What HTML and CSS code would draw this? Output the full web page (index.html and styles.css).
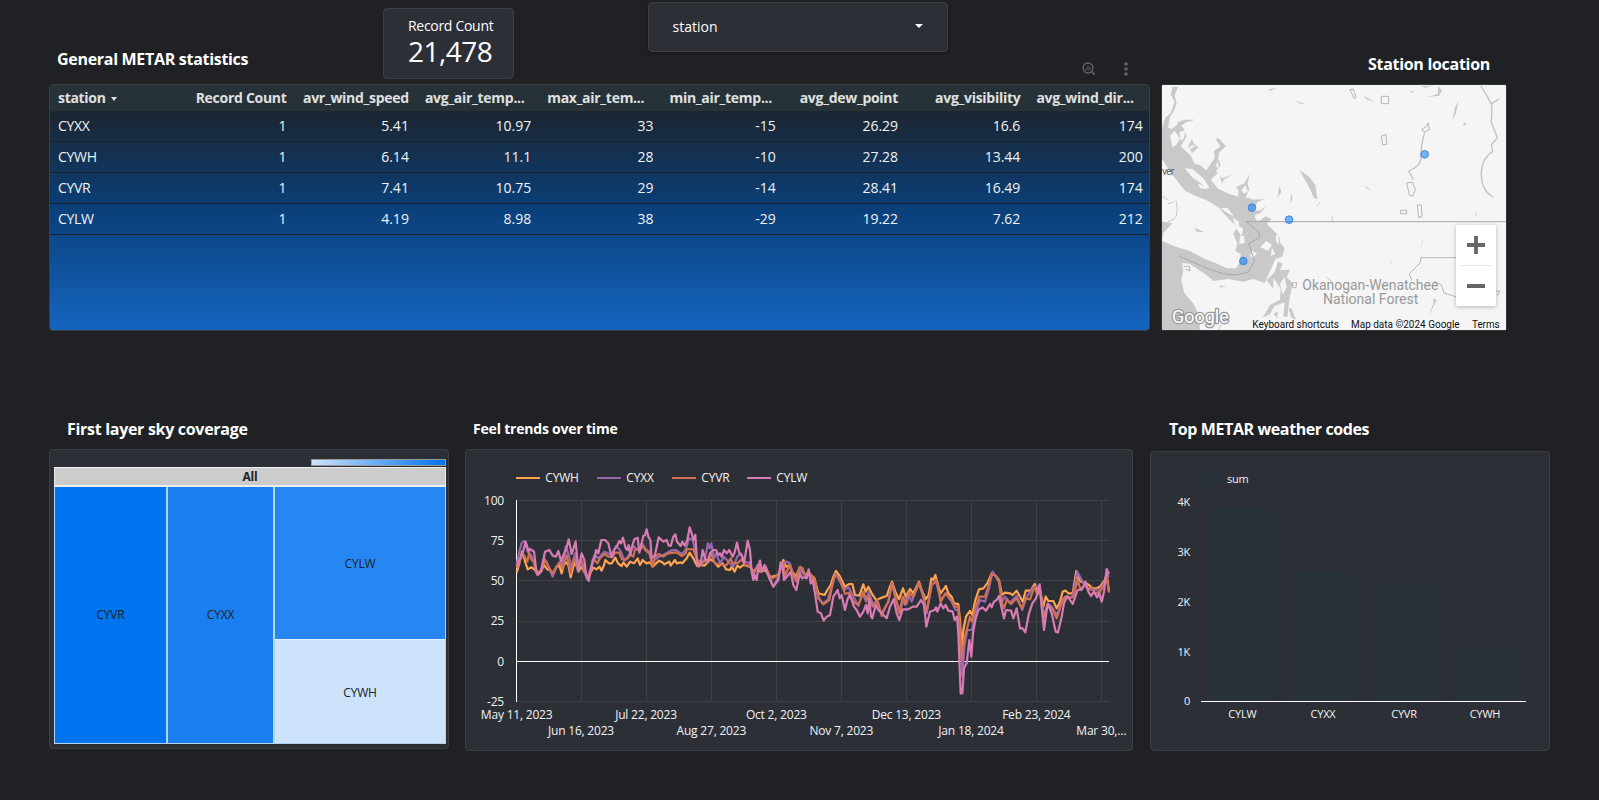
FILE: index.html
```html
<!DOCTYPE html>
<html lang="en">
<head>
<meta charset="utf-8">
<title>METAR dashboard</title>
<link rel="stylesheet" href="styles.css">
</head>
<body>
<main class="dashboard">
  <header class="top">
    <h2 class="title title-stats">General METAR statistics</h2>
    <div class="scorecard"><span class="score-label">Record Count</span><span class="score-value">21,478</span></div>
    <div class="select"><span>station</span><i class="caret"></i></div>
    <div class="tools">
      <svg width="14" height="14" viewBox="0 0 14 14" fill="none" stroke="#626468"><circle cx="6" cy="6" r="5" stroke-width="1.3"/><path d="M9.6 9.6l3 3" stroke-width="1.6"/><path d="M4 6v2.5M6 3.8v4.7M8 5.2v3.3" stroke-width="1"/></svg>
      <svg width="6" height="14" viewBox="0 0 6 14" fill="#626468"><circle cx="3" cy="2" r="1.8"/><circle cx="3" cy="7" r="1.8"/><circle cx="3" cy="12" r="1.8"/></svg>
    </div>
    <h2 class="title title-map">Station location</h2>
  </header>

  <section class="middle">
    <div class="table">
      <div class="row head"><span>station <i class="caret"></i></span><span>Record Count</span><span>avr_wind_speed</span><span class="cut">avg_air_temp...</span><span class="cut">max_air_tem...</span><span class="cut">min_air_temp...</span><span>avg_dew_point</span><span>avg_visibility</span><span class="cut">avg_wind_dir...</span></div>
      <div class="row"><span>CYXX</span><span>1</span><span>5.41</span><span>10.97</span><span>33</span><span>-15</span><span>26.29</span><span>16.6</span><span>174</span></div>
      <div class="row"><span>CYWH</span><span>1</span><span>6.14</span><span>11.1</span><span>28</span><span>-10</span><span>27.28</span><span>13.44</span><span>200</span></div>
      <div class="row"><span>CYVR</span><span>1</span><span>7.41</span><span>10.75</span><span>29</span><span>-14</span><span>28.41</span><span>16.49</span><span>174</span></div>
      <div class="row"><span>CYLW</span><span>1</span><span>4.19</span><span>8.98</span><span>38</span><span>-29</span><span>19.22</span><span>7.62</span><span>212</span></div>
    </div>
    <div class="map">
      <svg width="344" height="245" viewBox="36 134 1032 735">
        <rect x="36" y="134" width="1032" height="736" fill="#f5f5f5"/>
        <!-- water -->
        <g fill="#c9c9c9">
          <path d="M68 139L84 140 74 165 80 190 68 218 60 230 54 262 66 266 84 250 100 262 110 288 92 318 100 326 122 345 134 370 150 374 172 392 190 362 184 385 204 398 182 418 204 445 240 462 262 468 300 474 322 486 310 510 318 538 328 542 346 528 364 536 350 550 370 570 388 588 390 606 404 624 396 650 376 656 362 688 344 728 310 716 280 724 236 716 190 722 170 704 118 670 96 668 100 690 94 720 102 756 130 790 146 820 150 870 36 870 36 602 80 620 120 632 160 654 196 668 232 684 258 684 270 664 272 640 256 632 262 610 250 580 262 560 240 540 222 520 204 500 170 480 136 466 106 452 80 420 60 394 36 356 36 262 46 232 62 218 74 184 62 164z"/>
          <path d="M82 246L104 238 136 238 108 246 86 262zM204 292l24 26-20 18-4 18 8 20-20 26-24-8 16-24 10-14-2-22 20-14-14-20zM300 400l-8 30 6 16-12 28-22-6 2-18-8-10 24-10zM448 388l30 22 18 24 6 42-10-2-12-28zM388 438l6 16-12 20zM424 458l4 16-8 16zM300 478l44-2-22 10zM310 512l22-2 16-14-16 22-22 8zM352 148l28-6-20 10zM430 180l36 10-14 0zM640 166l36 20-28-10zM780 156l14-8-8 10zM812 138l32-2-18 6zM864 138l12 12-8 16-34 4 30-10zM926 180l-8 38-10 20 6-34zM944 246l6 8-12 2zM640 432l22 18-10-4zM36 544l32 4-28 30-4 24zM132 562l34 14-26-2zM208 736l22 0-18 6zM850 774l10 4-24 50 14-40zM210 408l8 6 30-12-28 18-4 10zM112 326l14-30 6 16 14 8-20 18-6-12 16-8-10-4zM976 512l8 20-8-10zM820 596l-10 38 6-30zM720 656l10 24-8-14z"/>
          <path d="M350 720L374 696 384 664 398 670 390 690 420 688 410 710 430 730 420 764 412 830 400 828 404 786 372 798 360 822 338 832 360 794 390 778 392 746 370 712 370 746z"/>
          <path d="M416 806l8-4 14 36-14-6zM370 820l14-6-2 20z"/>
        </g>
        <!-- islands -->
        <g fill="#f5f5f5">
          <path d="M104 384l24 2 34 30 18 30-26-16-26-18zM144 430l24 8 6 8-24-2zM60 286l14-14 16 22-10 18-12 10zM88 276l18-6-4 24-10 8zM210 504l22-2 20 26-14-6zM248 530l18 14 2 14 12 8-6 22-16-24zM330 620l20-18 16 12-12 18zM270 588l12-2 2 22-16 4zM306 630l14 10-12 14-8-8zM366 622l10 18-14 8zM378 584l8 0 0 30-8-10zM390 730l14-20 6 30-12 24zM196 378l8-16 2 22zM274 450l12-16 8 20-12 6z"/>
        </g>
        <g fill="none" stroke="#a6a6a6" stroke-width="3">
          <path d="M88 648L180 688 220 700 256 704 294 696 314 662 296 610 328 592 328 576 288 544H1068"/>
          <path d="M918 652H812V666L778 700 786 720M852 722l22 12 8 24 26 8 10 4M1038 752h12l-8 14M600 148l10-2 8 26-6 2zM694 168h22v22h-22zM694 288l14-6 2 30-12 2zM816 266l14-8 4-10 4 20-16 8zM770 428l18-2 8 22-8 20-10-4zM802 494l12 0 2 34-10 4zM752 510h18v10h-18zM440 726l-14 2 4 14h8zM102 678l16 0 2 14-14-6" opacity=".8"/>
          <path d="M824 276q-12 40-12 84-6 20-36 32l14 26M992 136l20 32 14 28-2 50 18 46-18 22 4 20q-30 16-34 60-2 56 36 76M1024 190l24-14" stroke="#c2c2c2" stroke-width="4"/>
          <path d="M38 468l16 12M54 490l16-4M78 480q14 60-24 64M546 528l2 14M500 498l10-12M530 710l18 16M206 868l8-16" stroke="#c9c9c9"/>
        </g>
        <g class="map-labels">
          <text x="661" y="750" font-size="42" text-anchor="middle" fill="#999" textLength="408" lengthAdjust="spacingAndGlyphs">Okanogan-Wenatchee</text>
          <text x="662" y="792" font-size="42" text-anchor="middle" fill="#999" textLength="286" lengthAdjust="spacingAndGlyphs">National Forest</text>
          <text x="36" y="404" font-size="32" fill="#666" textLength="37">ver</text>
          <text class="google" x="66" y="847" font-size="57" textLength="170" lengthAdjust="spacingAndGlyphs">Google</text>
          <text x="307" y="863" font-size="31" fill="#111" textLength="260" lengthAdjust="spacingAndGlyphs">Keyboard shortcuts</text>
          <text x="603" y="863" font-size="31" fill="#111" textLength="326" lengthAdjust="spacingAndGlyphs">Map data ©2024 Google</text>
          <text x="966" y="863" font-size="31" fill="#111" textLength="83" lengthAdjust="spacingAndGlyphs">Terms</text>
        </g>
        <g fill="#1a80ee" fill-opacity=".58" stroke="#2582ea" stroke-width="2.5">
          <circle cx="824" cy="342" r="11.5"/><circle cx="306" cy="502" r="11.5"/><circle cx="417" cy="538" r="11.5"/><circle cx="280" cy="662" r="11.5"/>
        </g>
      </svg>
      <div class="zoom">
        <svg width="40" height="81" viewBox="0 0 120 243"><path d="M33 60h54M60 33v54M33 183h54" stroke="#666" stroke-width="11.5"/><path d="M15 121.500h90" stroke="#e6e6e6" stroke-width="3"/></svg>
      </div>
    </div>
  </section>

  <section class="charts">
    <article class="col-tree">
      <h2 class="title">First layer sky coverage</h2>
      <div class="panel tree">
        <div class="legend-bar"></div>
        <div class="tree-head">All</div>
        <div class="tree-body">
          <div class="cell cyvr">CYVR</div><div class="cell cyxx">CYXX</div>
          <div class="cell cylw">CYLW</div><div class="cell cywh">CYWH</div>
        </div>
      </div>
    </article>

    <article class="col-trend">
      <h2 class="title small">Feel trends over time</h2>
      <div class="panel trend">
        <svg width="666" height="300" viewBox="18 150 1998 900">
          <g fill="none" stroke="#3e4145" stroke-width="3">
            <path d="M170 301.500H1947M170 421.500H1947M170 541.500H1947M170 664.500H1947M170 904.500H1947"/>
            <path d="M364.500 301V904M559.500 301V904M754.500 301V904M949.500 301V904M1144.500 301V904M1339.500 301V904M1534.500 301V904M1729.500 301V904M1924.500 301V904"/>
          </g>
          <path d="M169.500 300V906M168 784.500H1947" stroke="#fff" stroke-width="3"/>
          <g fill="none" stroke-width="6.6" stroke-linejoin="round">
            <g stroke="#ffa550">
              <path d="M168 234H240" stroke-width="6"/>
              <polyline points="170,518 178,490 186,455 190,465 197,490 203,508 215,502 225,510 233,525 243,515 252,495 262,508 270,510 278,520 290,500 298,497 305,520 311,495 318,487 325,495 332,532 340,500 347,487 355,515 365,500 375,520 383,530 393,515 400,503 410,508 418,500 425,512 432,495 436,480 447,490 455,490 466,473 474,490 485,498 490,487 500,500 510,485 522,490 533,475 540,495 548,480 558,490 570,487 578,500 597,482 607,487 613,493 628,485 632,497 645,480 650,490 662,487 667,490 680,475 689,458 700,475 711,497 722,495 733,497 743,487 752,478 762,485 775,500 788,490 798,508 810,510 815,500 824,515 832,497 840,503 850,495 870,500 880,515 892,500 900,515 915,510 930,530 938,530 955,525 962,505 970,480 978,500 990,495"/>
              <polyline transform="translate(990)" points="0,495 7,515 18,530 28,505 45,525 58,520 73,535 85,580 104,585 112,570 122,555 130,530 138,513 150,530 165,560 178,552 187,552 195,585 208,587 220,553 227,575 235,560 245,580 258,600 275,593 290,588 300,560 306,545 316,575 327,598 339,565 347,590 360,567 370,580 387,545 397,575 407,598 416,585 424,535 430,540 436,525 447,565 452,580 468,558 475,580 485,590 492,610 505,612 510,660 515,750 520,690 528,650 540,633 547,645 556,600 567,568 580,565 592,550 605,520 615,525 627,540 636,585 645,578 660,580 668,585 680,572 690,590 698,605 707,572 722,572 734,552 742,570 750,570 760,620 767,590 775,603 790,603 800,625 810,605 818,575 827,572 835,580 848,580 859,513 865,535 872,545 885,548 897,555 907,565 920,565 932,558 945,540 950,520 957,575"/>
            </g>
            <g stroke="#9866af">
              <path d="M411 234H483" stroke-width="6"/>
              <polyline points="170,495 178,455 185,428 194,423 203,455 213,465 222,490 232,525 245,505 252,475 262,490 278,530 290,500 300,485 307,495 317,440 325,460 335,505 345,460 353,512 363,480 373,515 381,537 393,510 403,465 415,475 433,455 447,462 458,460 468,438 480,450 494,482 510,460 520,438 535,450 546,430 557,447 568,455 577,485 597,470 610,465 632,452 647,450 665,462 677,450 687,415 698,420 712,480 722,485 733,485 744,430 749,445 754,430 762,475 768,460 780,490 792,470 805,485 820,500 832,470 843,460 855,487 868,487 880,525 893,495 905,510 917,500 928,530 940,560 955,530 965,490 980,485 990,490"/>
              <polyline transform="translate(990)" points="0,490 8,525 20,545 32,500 45,530 58,520 75,550 85,590 97,610 113,600 125,560 137,522 150,545 162,570 176,562 188,585 205,618 218,580 228,605 236,575 248,610 262,610 275,640 295,605 306,550 318,600 330,635 343,590 350,612 357,585 365,605 387,550 400,590 410,640 425,555 438,545 452,600 467,580 485,605 497,630 505,630 512,740 517,830 523,740 532,690 546,690 556,640 570,600 585,605 597,565 608,515 627,545 636,605 645,590 660,608 680,587 697,630 710,590 733,560 749,560 762,650 773,610 785,620 800,645 820,595 848,590 862,515 872,535 887,560 905,570 930,568 945,545 957,525"/>
            </g>
            <g stroke="#cf7152">
              <path d="M636 234H708" stroke-width="6"/>
              <polyline points="170,505 180,480 190,462 202,485 207,460 215,480 222,485 230,520 245,510 255,480 263,495 278,522 290,500 300,487 307,505 320,465 332,520 342,475 352,500 363,478 373,510 384,535 393,500 402,478 412,490 420,475 433,462 445,470 458,470 465,458 477,458 486,478 500,478 512,465 520,470 525,448 540,450 549,438 557,452 568,460 578,500 585,470 597,462 610,470 625,460 650,457 665,468 678,460 680,447 700,448 712,480 722,497 735,478 742,490 752,460 765,490 785,495 800,495 812,475 818,490 832,490 845,478 855,495 870,497 880,520 893,500 905,515 917,500 930,530 938,535 955,525 970,490 975,530 988,495 998,520"/>
              <polyline transform="translate(990)" points="8,520 18,542 28,502 38,505 45,525 56,515 75,545 85,595 100,613 118,600 126,560 135,525 145,530 155,550 165,582 178,578 190,605 205,615 220,575 230,600 236,588 248,620 262,598 275,648 285,625 295,605 306,550 318,600 328,640 338,590 345,615 357,578 370,590 387,548 400,590 410,635 425,555 440,540 452,605 467,580 485,600 495,620 505,620 510,690 516,780 522,720 530,690 540,650 546,665 557,620 568,590 585,590 595,560 604,525 615,525 627,545 636,610 642,625 650,600 663,612 680,595 695,625 708,595 720,598 733,560 742,585 749,565 757,630 763,650 772,615 785,625 800,655 815,610 825,590 838,595 850,590 863,540 872,570 887,550 895,570 905,560 915,580 930,575 945,550 950,530 957,578"/>
            </g>
            <g stroke="#d97cb3">
              <path d="M861 234H933" stroke-width="6"/>
              <polyline points="170,500 178,480 188,460 197,425 206,455 210,447 222,455 228,505 233,523 243,515 248,490 255,455 268,450 278,467 288,470 295,453 303,483 308,470 318,450 326,418 335,462 347,425 355,510 365,460 373,480 378,520 386,543 393,510 398,480 404,475 408,450 415,460 424,420 435,420 445,430 455,472 462,450 470,440 478,423 483,430 489,413 497,445 502,450 506,435 511,465 516,440 523,418 533,413 538,458 545,430 550,408 555,405 560,388 565,410 571,420 575,475 585,465 596,412 610,425 620,420 626,437 632,438 640,410 646,403 651,425 662,438 667,425 674,437 682,420 689,382 695,400 700,420 706,405 711,485 716,500 722,490 728,450 735,475 743,485 750,460 760,450 768,450 775,465 780,460 785,470 792,450 800,460 808,450 818,470 823,460 831,428 838,460 845,465 852,490 863,422 870,450 875,515 880,540 884,525 890,540 895,500 900,482 906,515 914,495 922,520 928,535 940,560 955,540 962,487 968,500 972,540 985,525 992,515 1000,555 1009,570 1015,540 1020,520 1026,535 1032,532"/>
              <polyline transform="translate(990)" points="42,532 50,535 56,508 62,550 68,540 75,580 83,635 93,640 101,662 110,650 120,645 130,590 143,570 149,595 155,585 165,630 172,600 178,585 185,600 192,620 200,630 210,650 220,635 228,615 233,640 238,597 243,650 247,655 257,615 265,630 275,640 290,655 300,620 311,597 320,640 328,660 338,628 355,628 368,620 380,620 393,600 402,615 409,680 420,635 434,630 438,622 442,635 452,610 460,625 467,615 475,632 488,635 494,660 501,650 505,700 512,880 517,880 522,805 530,790 538,720 544,770 549,700 556,660 565,630 577,622 588,632 600,612 605,622 612,605 620,600 627,588 634,620 642,655 648,630 663,632 670,655 680,625 690,685 698,685 706,697 717,640 727,610 738,595 749,553 755,620 762,690 770,630 774,612 785,640 797,695 804,697 815,650 822,610 832,588 840,600 848,612 856,590 863,570 876,568 887,545 895,575 903,588 912,575 921,592 928,580 935,605 942,575 950,507 957,522"/>
            </g>
          </g>
          <g class="labels" font-size="36">
            <text x="256" y="246">CYWH</text><text x="499" y="246">CYXX</text><text x="724" y="246">CYVR</text><text x="949" y="246">CYLW</text>
            <g text-anchor="end"><text x="132" y="315">100</text><text x="132" y="435">75</text><text x="132" y="555">50</text><text x="132" y="675">25</text><text x="132" y="798">0</text><text x="132" y="918">-25</text></g>
            <g text-anchor="middle"><text x="170" y="957">May 11, 2023</text><text x="558" y="957">Jul 22, 2023</text><text x="949" y="957">Oct 2, 2023</text><text x="1339" y="957">Dec 13, 2023</text><text x="1729" y="957">Feb 23, 2024</text><text x="363" y="1005">Jun 16, 2023</text><text x="754" y="1005">Aug 27, 2023</text><text x="1144" y="1005">Nov 7, 2023</text><text x="1533" y="1005">Jan 18, 2024</text><text x="1924" y="1005">Mar 30,…</text></g>
          </g>
        </svg>
      </div>
    </article>

    <article class="col-codes">
      <h2 class="title">Top METAR weather codes</h2>
      <div class="panel codes">
        <svg width="398" height="298" viewBox="33 156 1194 894">
          <g fill="#283238"><rect x="183" y="222" width="64" height="33"/><rect x="210" y="324" width="195" height="579"/><rect x="453" y="516" width="195" height="387"/><rect x="696" y="558" width="195" height="345"/><rect x="939" y="738" width="195" height="165"/></g>
          <path d="M183 904.500H1158" stroke="#fff" stroke-width="3"/>
          <g class="labels" font-size="33">
            <text x="261" y="249">sum</text>
            <g text-anchor="end"><text x="150" y="318">4K</text><text x="150" y="468">3K</text><text x="150" y="618">2K</text><text x="150" y="768">1K</text><text x="150" y="915">0</text></g>
            <g text-anchor="middle"><text x="307" y="954">CYLW</text><text x="549" y="954">CYXX</text><text x="792" y="954">CYVR</text><text x="1035" y="954">CYWH</text></g>
          </g>
        </svg>
      </div>
    </article>
  </section>
</main>
</body>
</html>
```
FILE: styles.css
```css
* { box-sizing: border-box; }
body { margin: 0; background: #202124; color: #fff; font-family: "Open Sans", "Noto Sans", sans-serif; }
.dashboard { width: 1599px; height: 800px; padding-left: 49px; overflow: hidden; }
.title { margin: 0; font-size: 16px; line-height: 22px; font-weight: 700; letter-spacing: -.3px; white-space: nowrap; }
.title.small { font-size: 14px; letter-spacing: -.2px; }

.top { display: flex; height: 84px; align-items: flex-start; }
.title-stats { width: 326px; padding-left: 8px; margin-top: 48px; }
.scorecard { width: 131px; height: 71px; margin: 8px 0 0 8px; padding: 7px 0 0 24px; display: flex; flex-direction: column; background: #2d2f37; border: 1px solid #3c4043; border-radius: 4px; }
.score-label { font-size: 14px; line-height: 19px; letter-spacing: -.3px; white-space: nowrap; }
.score-value { font-size: 28px; line-height: 33px; letter-spacing: -.5px; }
.select { width: 300px; height: 50px; margin: 2px 0 0 134px; padding: 0 24px 2px 23.5px; display: flex; align-items: center; justify-content: space-between; background: #2d2f37; border: 1px solid #3c4043; border-radius: 4px; font-size: 14px; box-shadow: 0 1px 3px #0005; }
.caret { display: inline-block; border: 4px solid transparent; border-top-color: currentColor; border-bottom: 0; }
.tools { display: flex; gap: 27px; margin: 62px 0 0 134px; width: 48px; }
.title-map { margin: 53px 0 0 238px; }

.middle { display: flex; gap: 11px; height: 247px; }
.table { width: 1101px; height: 247px; border: 1px solid #3c4043; border-radius: 4px; overflow: hidden; background: linear-gradient(#1c2530 26px, #0a3f78 122px, #1565c0 245px); }
.row { display: grid; grid-template-columns: repeat(9, 122.300px); width: 1101px; height: 31px; border-bottom: 1px solid #202124; font-size: 14px; line-height: 29px; color: #f1f3f4; }
.row span { padding: 0 8px; text-align: right; white-space: nowrap; }
.row span:first-child { text-align: left; letter-spacing: -.3px; }
.head { height: 26px; line-height: 26px; font-weight: 700; color: #e0e0e0; background: #263238; border: 0; letter-spacing: -.28px; }
.head .cut { text-align: left; }
.head .caret { border-width: 3.500px; border-top-width: 4px; border-bottom: 0; margin-left: 2px; vertical-align: 2px; }
.map { position: relative; width: 346px; height: 247px; border: 1px solid #30383a; border-radius: 2px; overflow: hidden; }
.map > svg, .zoom svg { display: block; }
.zoom { position: absolute; right: 10px; top: 140px; width: 40px; height: 81px; background: #fff; border-radius: 2px; box-shadow: 0 1px 4px #0004; }
.map-labels { font-family: Roboto, sans-serif; }
.google { font-weight: 400; fill: #fff; stroke: #999; stroke-width: 8px; paint-order: stroke; stroke-linejoin: round; }

.charts { display: flex; padding-top: 87px; align-items: flex-start; }
.charts .title { height: 31px; }
.col-tree .title { padding-left: 18px; }
.col-trend { margin-left: 16px; }
.col-trend .title { padding-left: 8px; }
.col-codes { margin-left: 17px; }
.col-codes .title { padding-left: 19px; height: 33px; letter-spacing: -.4px; }
.panel { background: #2d2f37; border: 1px solid #3c4043; border-radius: 4px; }
.panel svg { display: block; }
.tree { width: 400px; height: 300px; padding: 9px 2px 0 4px; color: #202124; font-size: 12px; letter-spacing: -.2px; }
.legend-bar { width: 135px; height: 7px; margin-left: auto; border: 1px solid #999; background: linear-gradient(90deg, #cce3fb, #0073f0); }
.tree-head { width: 392px; height: 19px; margin-top: 1px; background: #ccc; border: 1px solid #eee; text-align: center; font-weight: 700; line-height: 17px; }
.tree-body { display: grid; width: 392px; height: 258px; grid-template-columns: 113px 107px 170px; grid-template-rows: 155px 101px; border: 1px solid #b5d1f2; border-top-color: #eee; background: #d6e7f8; }
.cell { display: flex; align-items: center; justify-content: center; padding-bottom: 1px; }
.cyvr, .cyxx { grid-row: 1 / 3; border-right: 2px solid #b2d5fa; }
.cyvr { background: #0073f0; }
.cyxx { background: #197ff1; }
.cylw { background: #2687f3; border-bottom: 2px solid #cce3fb; box-shadow: inset 0 -1px #e6f1fd; }
.cywh { background: #cce3fb; }
.trend { width: 668px; height: 302px; }
.codes { width: 400px; height: 300px; }
.labels { fill: #f1f3f4; letter-spacing: -.6px; }
```
